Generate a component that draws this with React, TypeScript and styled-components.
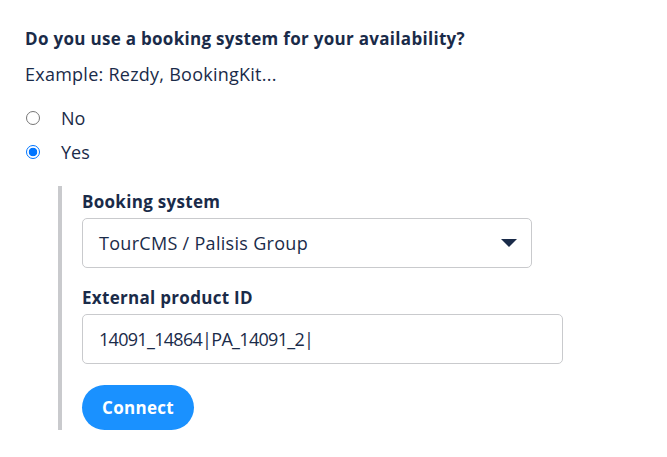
import React, { FC, useState } from 'react'
import styled, { createGlobalStyle } from 'styled-components'

const GlobalStyle = createGlobalStyle`
    body {
        margin: 0;
        background: #ffffff;
        font-family: "Open Sans", Lato, sans-serif;
        color: #1a2b49;
    }
`

const Page = styled.div`
    padding: 27px 25px;
`

const Question = styled.h3`
    margin: 0;
    font-size: 17px;
    font-weight: 700;
    line-height: 24px;
    letter-spacing: 0.3px;
`

const Hint = styled.p`
    margin: 11px 0 0;
    font-size: 18px;
    line-height: 24px;
    letter-spacing: 0.25px;
`

const RadioList = styled.div`
    display: flex;
    flex-direction: column;
    gap: 10px;
    margin-top: 20px;
`

const RadioRow = styled.label`
    display: flex;
    align-items: center;
    gap: 21px;
    font-size: 18px;
    line-height: 24px;
    cursor: pointer;
`

const RadioDot = styled.span<{ checked: boolean }>`
    box-sizing: border-box;
    width: 14px;
    height: 14px;
    margin-left: 1px;
    border-radius: 50%;
    border: ${p => p.checked ? '1px solid #0075ff' : '1px solid #767676'};
    background: ${p => p.checked ? 'radial-gradient(circle, #0075ff 0 4px, #ffffff 4.6px)' : '#ffffff'};
`

const Nested = styled.div`
    margin: 22px 0 0 33px;
    padding: 4px 0 0 20px;
    border-left: 4px solid #c9cacd;
    display: flex;
    flex-direction: column;
`

const FieldLabel = styled.div`
    font-size: 17px;
    font-weight: 700;
    line-height: 24px;
    letter-spacing: 0.3px;
    margin: 0 0 4px;
`

const Field = styled.div<{ width: number }>`
    box-sizing: border-box;
    width: ${p => p.width}px;
    height: 50px;
    display: flex;
    align-items: center;
    justify-content: space-between;
    padding: 0 14px 0 16px;
    border: 1px solid #c9cacd;
    border-radius: 5px;
    font-size: 18px;
    letter-spacing: 0.3px;
    margin-bottom: 18px;
`

const IdValue = styled.span`
    letter-spacing: -0.7px;
`

const Caret = styled.span`
    width: 0;
    height: 0;
    border-left: 8px solid transparent;
    border-right: 8px solid transparent;
    border-top: 8px solid #1a2b49;
`

const ConnectButton = styled.button`
    align-self: flex-start;
    height: 45px;
    padding: 0 20px;
    margin-top: 3px;
    border: none;
    border-radius: 23px;
    background: #1a91ff;
    color: #ffffff;
    font-family: inherit;
    font-size: 17px;
    font-weight: 700;
    letter-spacing: 0.3px;
    cursor: pointer;
`

const App: FC = () => {
    const [answer, setAnswer] = useState('yes')

    return (
        <Page>
            <GlobalStyle />
            <Question>Do you use a booking system for your availability?</Question>
            <Hint>Example: Rezdy, BookingKit...</Hint>
            <RadioList>
                {[['no', 'No'], ['yes', 'Yes']].map(([key, text]) => (
                    <RadioRow key={key} onClick={() => setAnswer(key)}>
                        <RadioDot checked={answer === key} />
                        {text}
                    </RadioRow>
                ))}
            </RadioList>
            <Nested>
                <FieldLabel>Booking system</FieldLabel>
                <Field width={450}>
                    <span>TourCMS / Palisis Group</span>
                    <Caret />
                </Field>
                <FieldLabel>External product ID</FieldLabel>
                <Field width={481}>
                    <IdValue>14091_14864|PA_14091_2|</IdValue>
                </Field>
                <ConnectButton>Connect</ConnectButton>
            </Nested>
        </Page>
    )
}

export default App
